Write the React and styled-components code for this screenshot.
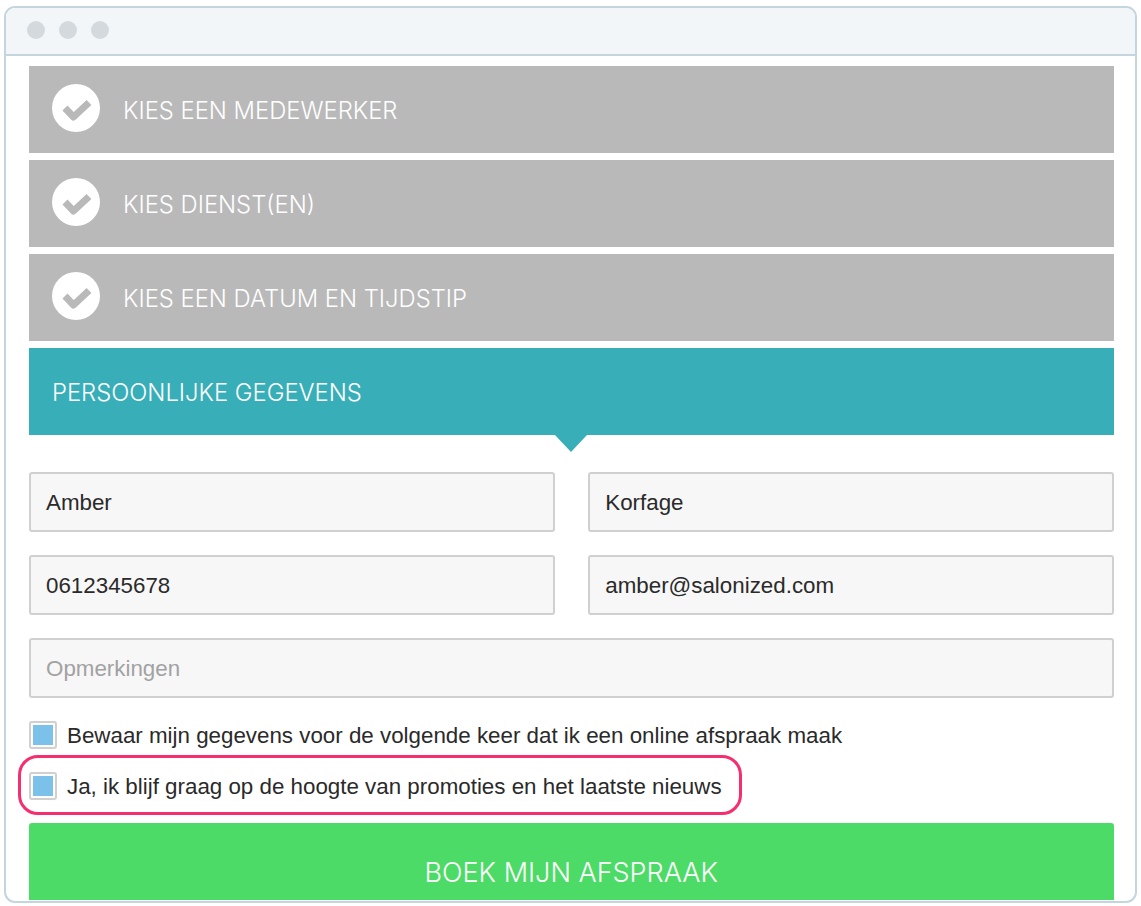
import React from "react";
import styled, { createGlobalStyle } from "styled-components";

const GlobalStyle = createGlobalStyle`
  html, body { margin: 0; padding: 0; background: #fff; }
  * { box-sizing: border-box; }
  body { font-family: "Liberation Sans", Arial, sans-serif; }
`;

const Frame = styled.div`
  width: 1133px;
  height: 897px;
  margin: 6px 0 0 4px;
  border: 2px solid #c5d5de;
  border-radius: 11px;
  background: #fff;
  overflow: hidden;
  display: flex;
  flex-direction: column;
`;

const TitleBar = styled.div`
  height: 48px;
  flex: none;
  background: #f2f6f9;
  border-bottom: 2px solid #c5d5de;
  display: flex;
  align-items: center;
  gap: 14px;
  padding: 0 0 2px 21px;
`;

const Dot = styled.span`
  width: 18px;
  height: 18px;
  border-radius: 50%;
  background: #d3d9dd;
`;

const Content = styled.div`
  flex: 1;
  padding: 10px 21px 0 22.5px;
  display: flex;
  flex-direction: column;
`;

const Step = styled.div`
  height: 87px;
  margin-bottom: 7px;
  background: ${(p) => (p.$active ? "#38aeb9" : "#b9b9b9")};
  display: flex;
  align-items: center;
  gap: 23px;
  padding: 1px 0 0 23.5px;
  position: relative;
  color: #fff;
  font-family: Inter, "Liberation Sans", sans-serif;
  font-weight: 300;
  font-size: 23.8px;

  ${(p) =>
    p.$active &&
    `
    margin-bottom: 0;
    &::after {
      content: "";
      position: absolute;
      left: 526px;
      top: 87px;
      border-left: 16px solid transparent;
      border-right: 16px solid transparent;
      border-top: 17px solid #38aeb9;
    }
  `}
`;

const CheckCircle = styled.svg`
  width: 48px;
  height: 48px;
  flex: none;
  margin-bottom: 4px;
`;

const FieldGrid = styled.div`
  display: grid;
  grid-template-columns: 1fr 1fr;
  column-gap: 33px;
  row-gap: 23px;
  margin-top: 37px;
`;

const Field = styled.div`
  height: 60px;
  background: #f7f7f7;
  border: 2px solid #d0d0d0;
  border-radius: 3px;
  display: flex;
  align-items: center;
  padding: 2px 0 0 15.5px;
  font-size: 22.35px;
  color: ${(p) => (p.$placeholder ? "#a2a2a2" : "#2a2a2a")};
  grid-column: ${(p) => (p.$wide ? "1 / -1" : "auto")};
`;

const CheckRow = styled.div`
  display: flex;
  align-items: center;
  gap: 10.5px;
  font-size: 22.35px;
  color: #2a2a2a;
  margin-top: 23px;
`;

const Highlight = styled(CheckRow)`
  width: 724px;
  height: 60px;
  margin: 6px 0 0 -10.5px;
  padding: 2px 0 0 7.5px;
  border: 3px solid #f72e6e;
  border-radius: 20px;
`;

const Label = styled.span`
  padding-top: 2px;
`;

const Box = styled.span`
  width: 28px;
  height: 28px;
  flex: none;
  border: 2px solid #d0d0d0;
  border-radius: 3px;
  background: #fff;
  display: flex;
  align-items: center;
  justify-content: center;

  &::before {
    content: "";
    width: 20px;
    height: 20px;
    background: #7cc1ea;
  }
`;

const SubmitButton = styled.div`
  height: 77px;
  margin-top: 8px;
  padding-top: 22px;
  background: #4cdb66;
  border-radius: 3px 3px 0 0;
  color: #fff;
  display: flex;
  align-items: center;
  justify-content: center;
  font-family: Inter, "Liberation Sans", sans-serif;
  font-weight: 300;
  font-size: 27px;
`;

const steps = ["KIES EEN MEDEWERKER", "KIES DIENST(EN)", "KIES EEN DATUM EN TIJDSTIP"];

const Check = () => (
  <CheckCircle viewBox="0 0 48 48">
    <circle cx="24" cy="24" r="24" fill="#fff" />
    <path d="M13 24l8.5 9L37 18.5" fill="none" stroke="#b9b9b9" strokeWidth="7" strokeLinejoin="round" />
  </CheckCircle>
);

export default function App() {
  return (
    <>
      <GlobalStyle />
      <Frame>
        <TitleBar>
          <Dot />
          <Dot />
          <Dot />
        </TitleBar>
        <Content>
          {steps.map((s) => (
            <Step key={s}>
              <Check />
              {s}
            </Step>
          ))}
          <Step $active>PERSOONLIJKE GEGEVENS</Step>
          <FieldGrid>
            <Field>Amber</Field>
            <Field>Korfage</Field>
            <Field>0612345678</Field>
            <Field>amber@salonized.com</Field>
            <Field $wide $placeholder>Opmerkingen</Field>
          </FieldGrid>
          <CheckRow>
            <Box />
            <Label>Bewaar mijn gegevens voor de volgende keer dat ik een online afspraak maak</Label>
          </CheckRow>
          <Highlight>
            <Box />
            <Label>Ja, ik blijf graag op de hoogte van promoties en het laatste nieuws</Label>
          </Highlight>
          <SubmitButton>BOEK MIJN AFSPRAAK</SubmitButton>
        </Content>
      </Frame>
    </>
  );
}
